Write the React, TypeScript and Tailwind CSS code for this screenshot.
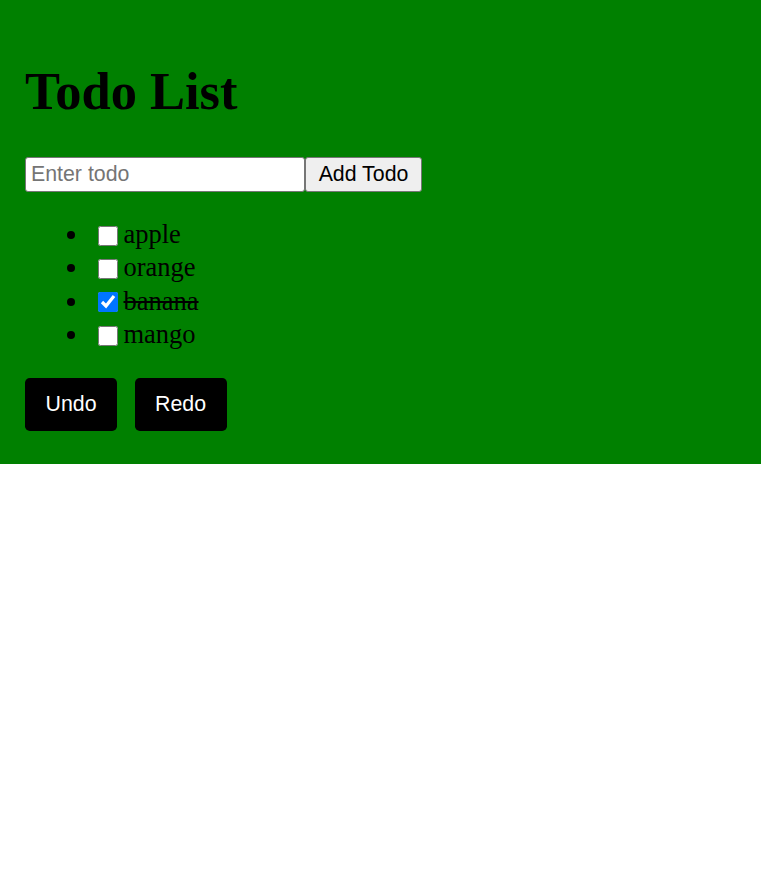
import React, { useState } from "react";

const App = () => {
  const [todos, setTodos] = useState([
    { text: "apple", done: false },
    { text: "orange", done: false },
    { text: "banana", done: true },
    { text: "mango", done: false },
  ]);

  const toggle = (i: number) => {
    setTodos(todos.map((t, j) => (j === i ? { ...t, done: !t.done } : t)));
  };

  return (
    <main
      className="w-full min-h-[882px] bg-white text-black"
      style={{ fontFamily: "'Liberation Serif', 'Times New Roman', serif" }}
    >
      {/* Green panel */}
      <div className="flex flex-col items-start bg-[#008000] pl-[25px] pt-[61.5px] pb-[33px]">
        <h1 className="text-[52.5px] leading-[58.9px] font-bold">Todo List</h1>

        <div className="flex mt-[36.9px]">
          <input
            type="text"
            placeholder="Enter todo"
            className="w-[280px] h-[34.4px] bg-white border-[1.6px] border-[#767676] rounded-[3px] px-[5px] text-[21.33px] placeholder:text-[#757575] text-black"
            style={{ fontFamily: "'Liberation Sans', Arial, sans-serif" }}
          />
          <button
            className="w-[117px] h-[34.4px] bg-[#efefef] border-[1.6px] border-[#767676] rounded-[3px] text-[21.33px] text-black"
            style={{ fontFamily: "'Liberation Sans', Arial, sans-serif" }}
          >
            Add Todo
          </button>
        </div>

        <ul className="list-disc pl-[64.6px] mt-[26.5px] text-[26.5px]">
          {todos.map((t, i) => (
            <li key={t.text} className="leading-[33.3px]">
              <input
                type="checkbox"
                checked={t.done}
                onChange={() => toggle(i)}
                className="w-[20px] h-[20px] ml-[8.4px] mr-[5.5px] align-[-2.5px] rounded-[3px]"
              />
              <span className={t.done ? "line-through" : ""}>{t.text}</span>
            </li>
          ))}
        </ul>

        <div
          className="flex mt-[27px]"
          style={{ fontFamily: "'Liberation Sans', Arial, sans-serif" }}
        >
          <button className="bg-black text-white rounded-[4.8px] px-[20.5px] py-[14px] text-[21.33px] leading-[24.5px] mr-[17.6px]">
            Undo
          </button>
          <button className="bg-black text-white rounded-[4.8px] px-[20.5px] py-[14px] text-[21.33px] leading-[24.5px]">
            Redo
          </button>
        </div>
      </div>
    </main>
  );
};

export default App;
